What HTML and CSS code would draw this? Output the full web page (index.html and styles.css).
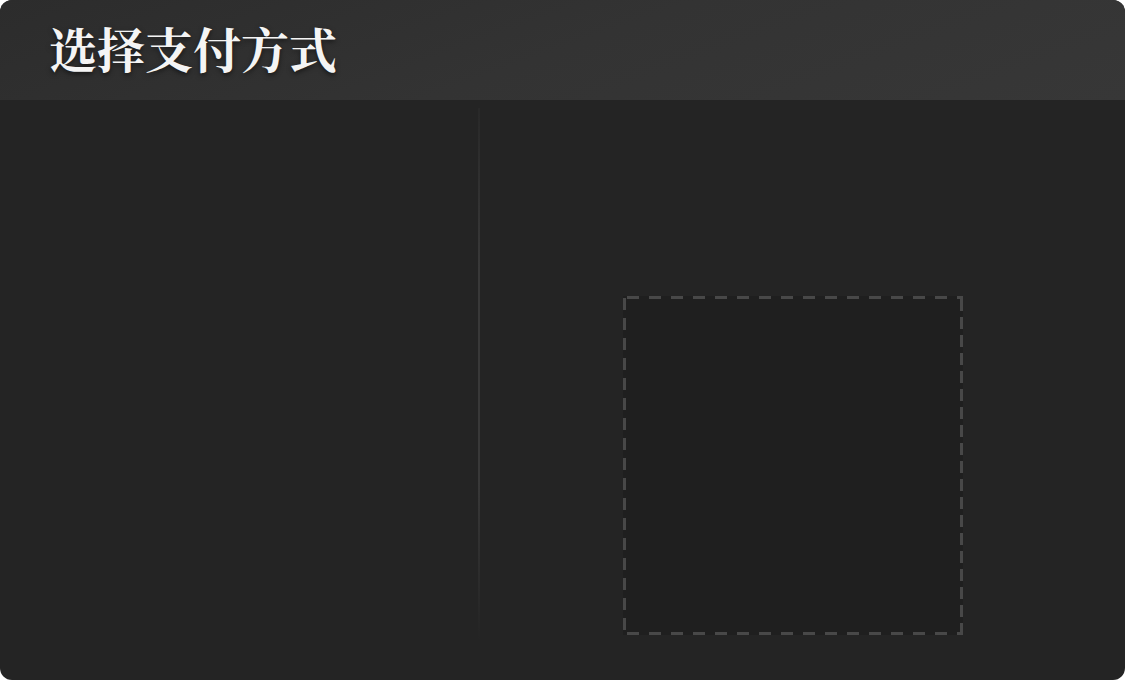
FILE: index.html
```html
<!DOCTYPE html>
<html lang="zh">
<head>
<meta charset="utf-8">
<title>选择支付方式</title>
<link rel="stylesheet" href="styles.css">
</head>
<body>
<div class="card">
  <header class="head">
    <h1 class="title">选择支付方式</h1>
  </header>
  <main class="content">
    <section class="left"></section>
    <div class="divider"></div>
    <section class="right">
      <div class="qr"></div>
    </section>
  </main>
</div>
</body>
</html>
```

FILE: styles.css
```css
html, body {
  margin: 0;
  padding: 0;
  background: #ffffff;
}
.card {
  width: 1125px;
  height: 680px;
  border-radius: 12px;
  overflow: hidden;
  background: #242424;
  display: flex;
  flex-direction: column;
}
.head {
  height: 100px;
  flex: none;
  box-sizing: border-box;
  padding-left: 49px;
  display: flex;
  align-items: center;
  background: linear-gradient(160deg, #2c2c2c 0%, #333333 50%, #373737 100%);
}
.title {
  margin: 0 0 4px;
  font-family: "Noto Serif CJK SC", "Source Han Serif SC", "Liberation Serif", "Noto Sans CJK SC", serif;
  font-size: 48px;
  font-weight: 700;
  letter-spacing: 0;
  color: #f4f4f4;
  text-shadow: 0 2px 5px rgba(0,0,0,0.55);
  line-height: 1;
}
.content {
  flex: 1;
  display: flex;
  padding: 8px 0 38px;
}
.left {
  width: 478px;
  flex: none;
}
.divider {
  width: 2px;
  flex: none;
  background: linear-gradient(to bottom, rgba(60,60,60,0.2), #383838 30%, #383838 70%, rgba(60,60,60,0));
}
.right {
  flex: 1;
  padding: 188px 0 0 143px;
}
.qr {
  width: 340px;
  height: 339px;
  background:
    repeating-linear-gradient(90deg, transparent 0 4px, #484848 4px 16px, transparent 16px 22px) left top / 100% 3px no-repeat,
    repeating-linear-gradient(90deg, transparent 0 4px, #484848 4px 16px, transparent 16px 22px) left bottom / 100% 3px no-repeat,
    repeating-linear-gradient(180deg, transparent 0 2px, #484848 2px 14px, transparent 14px 20px) left top / 3px 100% no-repeat,
    repeating-linear-gradient(0deg, transparent 0 0px, #484848 0px 12px, transparent 12px 18px) right bottom / 3px 100% no-repeat,
    #1f1f1f;
}
```
